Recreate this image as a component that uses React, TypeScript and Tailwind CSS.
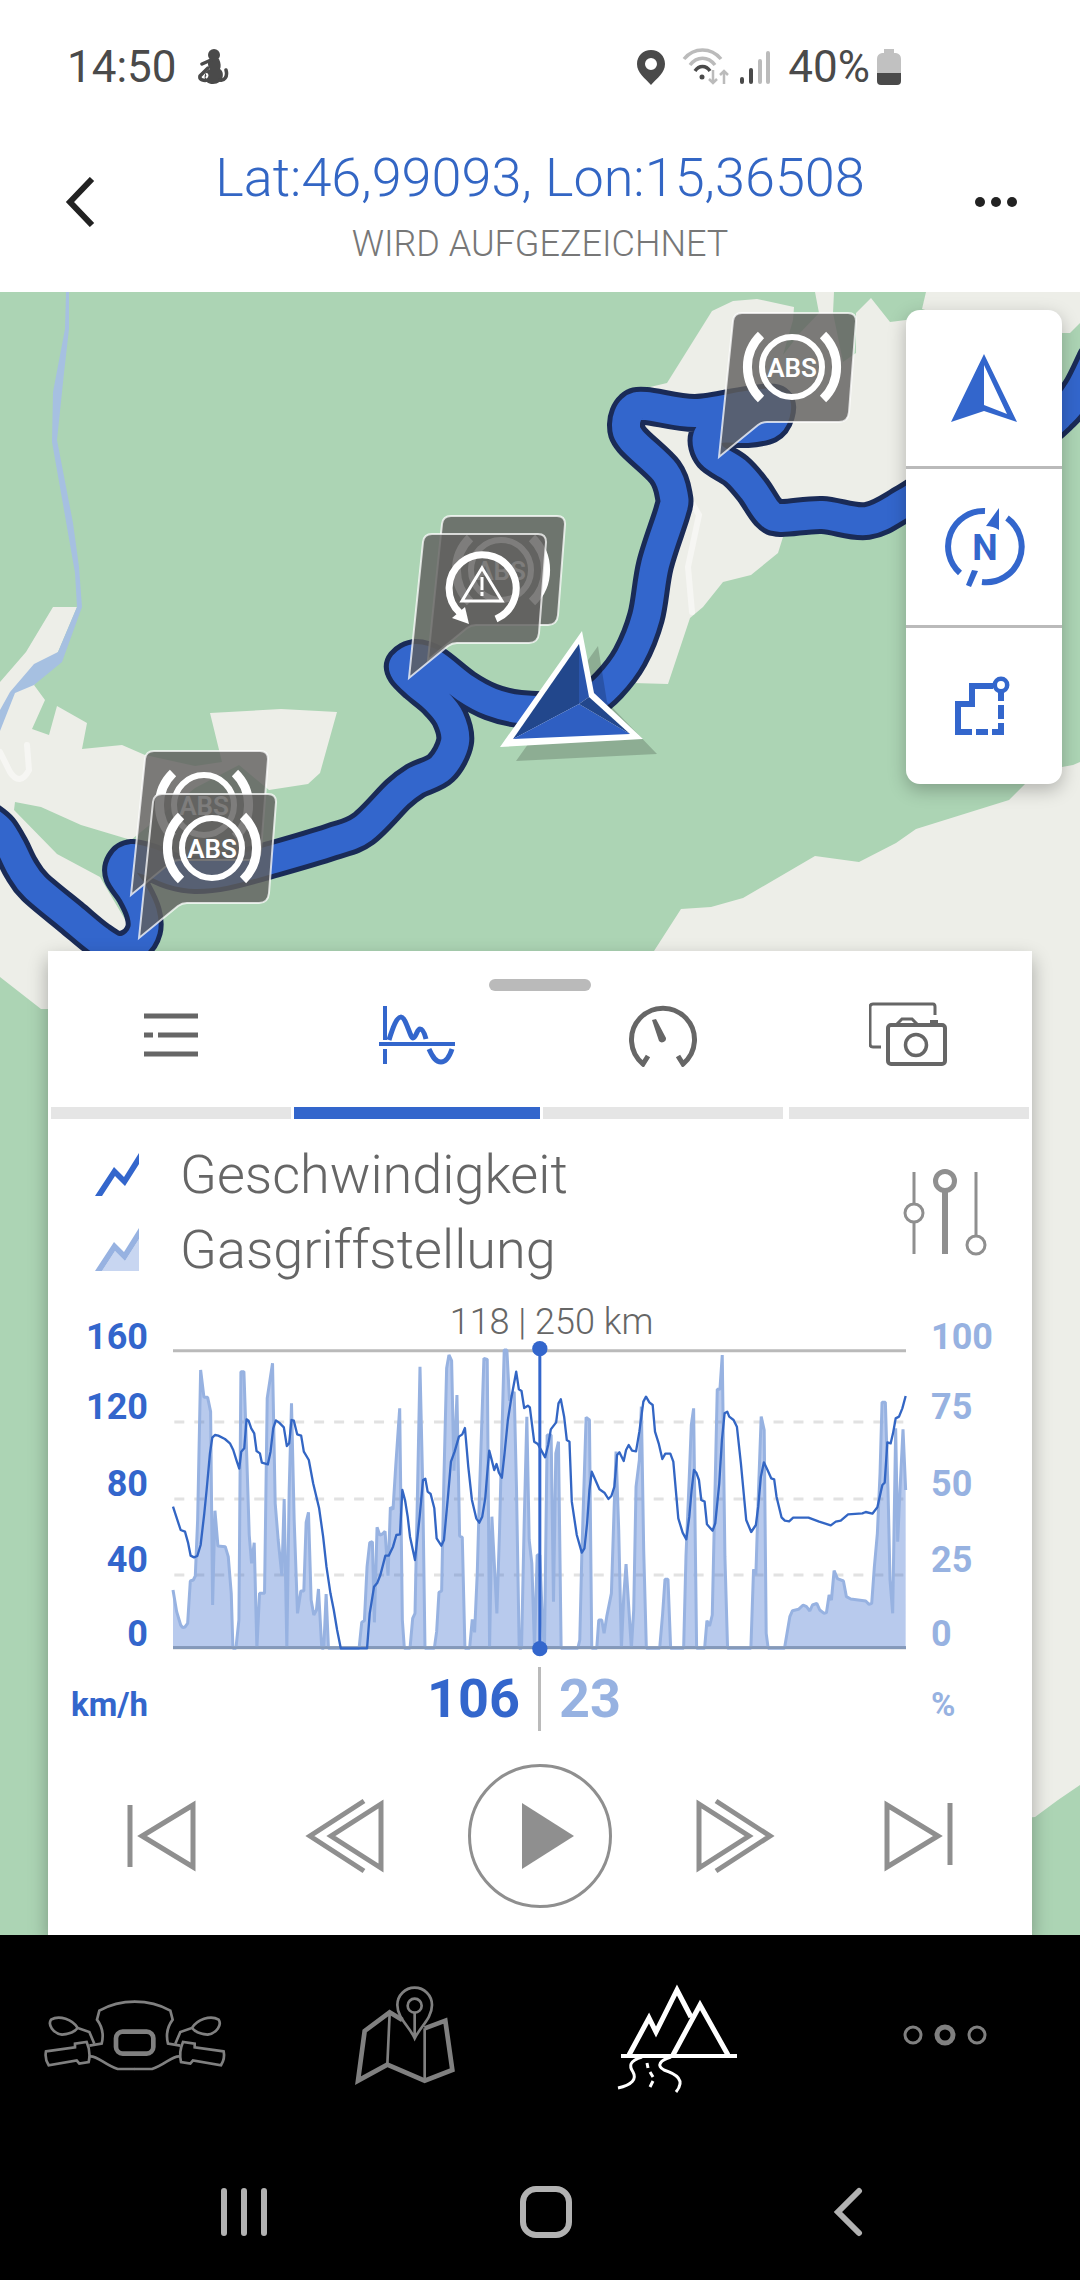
import type { ReactNode } from "react";

type Point = [number, number];

/** Turns "x,y x,y ..." into a list of points. */
const parse = (text: string): Point[] =>
  text.split(" ").map((pair) => pair.split(",").map(Number) as Point);

/** Smooth curve that passes through every point (Catmull-Rom). */
function smooth(points: Point[]): string {
  let d = `M${points[0][0]} ${points[0][1]}`;
  for (let i = 0; i < points.length - 1; i++) {
    const a = points[Math.max(i - 1, 0)];
    const b = points[i];
    const c = points[i + 1];
    const e = points[Math.min(i + 2, points.length - 1)];
    d += `C${b[0] + (c[0] - a[0]) / 6} ${b[1] + (c[1] - a[1]) / 6} ${c[0] - (e[0] - b[0]) / 6} ${c[1] - (e[1] - b[1]) / 6} ${c[0]} ${c[1]}`;
  }
  return d;
}

const ROUTE = smooth(
  parse(
    "-12,820 0,830 11,848 21,868 35,887 71,917 99,940 118,950 135,944 144,930 143,913 134,893 122,875 123,864 132,858 150,862 172,871 195,875 225,872 274,859 331,842 363,829 398,794 415,781 441,768 455,742 450,718 436,700 417,684 405,672 404,664 416,658 434,664 465,688 491,702 520,709 560,709 590,700 609,685 630,657 646,617 655,565 672,512 674,497 665,472 632,440 626,424 632,409 646,406 695,413 747,405 774,403 776,414 768,425 747,429 720,429 707,437 712,455 736,471 753,490 768,512 781,518 822,515 867,521 906,502 960,468 1030,438 1062,413 1080,390 1095,360",
  ),
);

const SPEED =
  "339,650 362,720 375,725 384,757 392,797 402,802 412,798 422,765 433,670 440,600 450,490 457,443 465,435 475,437 495,447 510,460 520,480 530,512 538,536 544,485 553,475 560,388 566,392 574,415 583,430 590,483 600,490 606,518 624,523 632,485 640,415 648,391 658,398 672,412 681,468 688,460 695,390 702,392 712,433 724,437 732,485 747,510 760,580 778,655 790,740 800,830 812,910 822,960 832,1020 843,1075 922,1075 930,970 943,890 953,878 962,855 977,797 987,797 1000,770 1010,735 1021,733 1028,600 1036,630 1044,680 1051,740 1066,810 1080,680 1090,570 1097,566 1104,605 1113,612 1124,655 1131,745 1145,767 1153,750 1165,620 1174,515 1185,485 1198,440 1208,433 1216,414 1226,530 1237,630 1250,685 1259,698 1268,680 1277,625 1283,550 1289,482 1296,508 1304,540 1311,522 1318,548 1327,563 1335,490 1345,390 1356,320 1370,245 1378,298 1386,303 1394,354 1405,347 1411,352 1424,455 1435,462 1442,475 1457,502 1466,465 1474,418 1490,397 1497,340 1504,328 1514,380 1522,450 1530,455 1537,635 1552,735 1567,788 1575,775 1583,700 1590,600 1597,545 1620,598 1635,608 1647,627 1656,618 1665,590 1673,495 1680,487 1693,513 1700,480 1708,465 1718,482 1730,484 1740,425 1752,335 1760,320 1770,337 1780,345 1787,425 1798,460 1809,507 1818,491 1833,491 1842,515 1857,685 1870,728 1881,748 1890,680 1897,600 1904,540 1911,548 1919,570 1926,630 1936,635 1943,703 1960,722 1968,700 1980,580 1988,450 1996,370 2004,365 2010,380 2023,390 2033,410 2045,520 2061,690 2076,726 2090,705 2097,650 2105,560 2114,517 2125,540 2136,565 2145,568 2152,620 2167,682 2177,692 2190,694 2202,683 2248,683 2280,695 2315,706 2330,695 2345,692 2367,673 2410,670 2420,666 2440,671 2455,652 2470,585 2477,578 2485,457 2495,460 2502,430 2510,385 2520,380 2530,355 2540,318";

const THROTTLE =
  "339,900 350,965 362,1005 368,1013 375,1011 383,1000 391,873 400,870 406,858 413,690 422,240 432,322 443,322 452,365 458,945 465,662 474,768 496,770 505,800 514,910 519,1075 528,1075 537,990 543,245 552,245 559,450 568,735 575,820 583,758 591,1075 599,910 614,910 622,325 638,220 646,640 655,750 666,857 673,627 681,1075 688,600 695,340 703,690 713,970 723,903 732,903 739,697 746,667 754,930 762,975 770,960 776,897 786,1075 792,1075 799,912 806,1075 898,1075 906,997 914,992 922,830 930,758 938,755 944,997 952,712 960,735 968,732 976,724 985,857 992,652 1000,658 1008,530 1020,355 1028,990 1034,1075 1051,1075 1059,985 1066,970 1074,580 1081,230 1089,580 1096,1075 1124,1075 1131,1025 1138,907 1146,903 1153,560 1161,235 1168,195 1176,212 1183,542 1192,315 1200,738 1208,742 1216,1075 1230,1075 1238,988 1245,1027 1253,850 1260,600 1273,205 1283,208 1290,1075 1297,680 1312,970 1320,720 1328,400 1334,180 1342,180 1350,332 1364,305 1371,600 1379,1075 1386,1075 1394,700 1402,380 1409,750 1417,820 1425,1075 1433,795 1441,795 1449,1000 1455,1075 1463,435 1475,435 1482,935 1489,490 1497,455 1505,1075 1555,1075 1561,1050 1567,800 1580,382 1590,390 1597,1075 1612,1075 1618,990 1627,990 1634,1030 1642,980 1656,910 1664,660 1670,485 1678,720 1686,1075 1693,920 1700,822 1708,950 1716,1075 1723,960 1730,590 1740,510 1746,350 1753,780 1761,1075 1801,1075 1810,970 1817,868 1826,868 1834,1075 1873,1075 1880,800 1890,560 1896,405 1903,355 1912,1075 1936,1075 1943,992 1951,1008 1959,975 1966,660 1974,298 1982,298 1989,195 1997,800 2005,1075 2075,1075 2083,838 2090,855 2098,600 2106,380 2115,420 2121,1030 2127,1075 2176,1075 2192,980 2200,962 2218,958 2232,945 2242,950 2252,963 2260,945 2273,940 2282,960 2295,970 2302,968 2310,915 2317,930 2325,842 2335,866 2353,873 2362,920 2375,927 2420,933 2430,943 2438,940 2446,830 2455,730 2463,550 2469,337 2479,337 2487,600 2493,870 2501,970 2510,415 2516,755 2523,600 2532,418 2540,600";

/* ---------- Status bar ---------- */

function StatusBar() {
  return (
    <div className="flex h-[134px] items-center justify-between pr-[178px] pl-[67px] text-[44px] leading-none text-[#4a4a4a]">
      <div className="flex items-center gap-5">
        <span>14:50</span>
        <svg viewBox="0 0 32 36" className="h-9 w-8" fill="#4a4a4a" aria-hidden="true">
          <circle cx="17" cy="6" r="6" />
          <path d="M12 10 L22 10 C24 14 24 18 23 20 C28 23 27 35 16 35 C6 35 5 24 13 20 C10 16 11 13 12 10Z" />
          <path d="M14 11 L5 15 M11 19 L3 27 C2 31 7 32 11 31 M23 31 C27 32 31 28 29 21" fill="none" stroke="#4a4a4a" strokeWidth="3.5" strokeLinecap="round" />
          <path d="M9 25 C11 25 11 27 9 29" fill="none" stroke="#fff" strokeWidth="2" />
        </svg>
      </div>
      <div className="flex items-center">
        <svg viewBox="0 0 30 36" className="h-9 w-[30px]" aria-hidden="true">
          <path fillRule="evenodd" fill="#4a4a4a" d="M15 1 C7 1 1 7 1 15 C1 24 9 29 15 36 C21 29 29 24 29 15 C29 7 23 1 15 1Z M15 9 A6 6 0 1 1 15 21 A6 6 0 1 1 15 9Z" />
        </svg>
        <svg viewBox="0 0 48 38" className="ml-4 h-[38px] w-12" fill="none" strokeWidth="3.5" aria-hidden="true">
          <path d="M2 11 C12 -1 29 -1 39 11" stroke="#bbb" />
          <path d="M8 17 C15 8 26 8 33 17" stroke="#bbb" />
          <path d="M13 23 C17 17 24 17 28 23" stroke="#4a4a4a" />
          <circle cx="20" cy="29" r="2.5" fill="#4a4a4a" />
          <path d="M31 22 V35 M27 31 L31 35 L35 31 M42 36 V23 M38 27 L42 23 L46 27" stroke="#bbb" strokeWidth="2.5" />
        </svg>
        <svg viewBox="0 0 34 36" className="ml-2 h-9 w-[34px]" strokeWidth="4" strokeLinecap="round" aria-hidden="true">
          <path d="M4 30 V33 M13 21 V33" stroke="#4a4a4a" />
          <path d="M22 12 V33 M30 4 V33" stroke="#bbb" />
        </svg>
        <span className="ml-4">40%</span>
        <svg viewBox="0 0 26 38" className="ml-1.5 h-[38px] w-[26px]" aria-hidden="true">
          <path d="M8 1 H18 V5 H20 Q25 6 25 11 V26 H1 V11 Q1 6 6 5 H8Z" fill="#c1c1c1" />
          <path d="M1 25 H25 V33 Q25 37 21 37 H5 Q1 37 1 33Z" fill="#4a4a4a" />
        </svg>
      </div>
    </div>
  );
}

function Header() {
  return (
    <header className="flex h-[158px] items-start justify-between px-[58px] pt-3">
      <button type="button" aria-label="Zurück" className="flex h-28 w-12 items-center justify-start">
        <svg viewBox="0 0 40 50" className="h-[50px] w-10" fill="none" stroke="#222" strokeWidth="6">
          <path d="M34 2 L12 25 L34 48" />
        </svg>
      </button>
      <div className="flex flex-col items-center font-light">
        <h1 className="text-[54px] leading-[64px] text-[#3366c4]">Lat:46,99093, Lon:15,36508</h1>
        <p className="text-[36px] leading-[68px] text-[#777]">WIRD AUFGEZEICHNET</p>
      </div>
      <button type="button" aria-label="Mehr" className="flex h-28 w-12 items-center justify-start">
        <svg viewBox="0 0 44 12" className="h-3 w-11" fill="#222">
          <circle cx="6" cy="6" r="5" />
          <circle cx="22" cy="6" r="5" />
          <circle cx="38" cy="6" r="5" />
        </svg>
      </button>
    </header>
  );
}

/* ---------- Map ---------- */

function Bubble({ x, y, children }: { x: number; y: number; children: ReactNode }) {
  return (
    <g transform={`translate(${x} ${y})`}>
      <path
        d="M0 0 L14 -136 Q15 -144 23 -144 H129 Q137 -144 137 -136 L130 -45 Q129 -35 120 -35 H48 Q43 -35 39 -32 Z"
        fill="#605f5e"
        fillOpacity="0.81"
        stroke="#fff"
        strokeOpacity="0.75"
        strokeWidth="2"
      />
      <g transform="translate(73 -90)">{children}</g>
    </g>
  );
}

function AbsSign() {
  return (
    <g fill="none" stroke="#fff">
      <circle r="30" strokeWidth="6" />
      <path d="M-31 -32 A44.5 44.5 0 0 0 -31 32 M31 -32 A44.5 44.5 0 0 1 31 32" strokeWidth="9" />
      <text
        y="10"
        textAnchor="middle"
        fill="#fff"
        stroke="none"
        className="font-['Liberation_Sans_Narrow',Roboto,sans-serif] text-[26px] font-semibold"
      >
        ABS
      </text>
    </g>
  );
}

function TractionSign() {
  return (
    <g fill="none" stroke="#fff">
      <path d="M-22 25 A33.5 33.5 0 1 1 14 31" strokeWidth="7" />
      <path d="M-30 30 L-17 19 L-13 36Z" fill="#fff" stroke="none" />
      <path d="M0 -20 L20 13 H-20Z" strokeWidth="3" />
      <path d="M0 -11 V2 M0 4 V8" strokeWidth="3" />
    </g>
  );
}

function MapCanvas() {
  return (
    <svg
      viewBox="0 292 1080 1643"
      preserveAspectRatio="xMidYMin slice"
      className="absolute inset-0 h-full w-full"
      role="img"
      aria-label="Karte mit aufgezeichneter Route"
    >
      <rect y="292" width="1080" height="1643" fill="#acd4b4" />
      <g fill="#edeee8">
        <path d="M53 607 H77 L58 652 L34 685 L45 700 L32 729 L49 735 L57 706 L87 723 L82 749 L122 745 L145 755 L195 766 L222 762 L210 713 L281 709 L337 712 L320 773 L308 784 L269 790 L239 765 L195 788 L131 840 L81 825 L41 807 L15 802 L14 810 L57 854 L100 877 L127 923 L130 970 L48 1009 H41 L0 977 V682 L26 652Z" />
        <path d="M650 387 L667 383 L712 311 L733 301 L757 299 L794 307 L793 320 L783 355 L800 333 L819 313 L815 292 H834 L833 313 L843 362 L856 353 V313 L871 298 L890 322 L906 320 L980 340 L906 510 L783 537 L778 553 L751 575 L723 582 L703 607 L690 618 L668 684 L633 683 L655 600 L675 500 L630 420Z" />
        <path d="M926 292 H1080 V323 L1070 333 H1000 L922 309Z" />
        <path d="M654 951 L681 909 L711 907 L743 898 L815 856 L859 862 L896 843 L916 829 L1009 800 L1025 784 L1062 767 L1073 765 L1080 762 V1785 L1058 1800 L1035 1817 L900 1830Z" />
      </g>
      <path
        d="M66 292 L65 329 L53 392 L52 442 L64 510 L75 573 L77 607 L58 652 L34 664 L10 692 L0 710 V731 L15 693 L34 685 L62 662 L82 607 L79 567 L73 523 L57 440 L64 373 L69 329 V292Z"
        fill="#a6c0e1"
      />
      <path
        d="M0 752 L10 772 Q20 787 29 770 L27 745 M692 503 L699 515 L688 567 L692 612"
        fill="none"
        stroke="#f6f6f3"
        strokeWidth="6"
        strokeLinecap="round"
      />
      <g fill="none" strokeLinejoin="round" strokeLinecap="round">
        <path d={ROUTE} stroke="#1a2b57" strokeWidth="38" />
        <path d={ROUTE} stroke="#3366cc" strokeWidth="28" />
      </g>

      <Bubble x={719} y={457}>
        <AbsSign />
      </Bubble>
      <Bubble x={428} y={660}>
        <AbsSign />
      </Bubble>
      <Bubble x={409} y={678}>
        <TractionSign />
      </Bubble>
      <Bubble x={131} y={895}>
        <AbsSign />
      </Bubble>
      <Bubble x={139} y={938}>
        <AbsSign />
      </Bubble>

      <path d="M598 646 L607 702 L657 754 L516 761Z" fillOpacity="0.18" />
      <path d="M582 631 L594 693 L643 739 L500 747Z" fill="#fff" />
      <path d="M579 644 L579 704 L513 739Z" fill="#22478c" />
      <path d="M579 644 L589 697 L579 704Z" fill="#2a55ac" />
      <path d="M579 704 L630 734 L513 739Z" fill="#2f5fc2" />
      <path d="M579 704 L589 697 L630 734Z" fill="#22478c" />
    </svg>
  );
}

function MapTools() {
  return (
    <div className="absolute top-[18px] right-[18px] flex w-[156px] flex-col divide-y-3 divide-[#bababa] overflow-hidden rounded-[14px] bg-white shadow-[0_6px_18px_rgba(0,0,0,0.25)]">
      <button type="button" aria-label="Position" className="block">
        <svg viewBox="0 0 156 156" className="w-full" fill="#3366cc">
          <path fillRule="evenodd" d="M78 44 L111 112 L78 101 L45 112Z M78 55 V95 L101 104Z" />
        </svg>
      </button>
      <button type="button" aria-label="Nach Norden ausrichten" className="block">
        <svg viewBox="0 0 156 156" className="w-full" fill="#3366cc">
          <path d="M79 42 A35.5 35.5 0 0 0 54 104 M76 113 A35.5 35.5 0 0 0 101 49" fill="none" stroke="#3366cc" strokeWidth="6" />
          <path d="M93 39 V61 Q87 57 80 57Z" />
          <path d="M66 101 L72 102 L65 118 L60 116Z" />
          <text x="79" y="91" textAnchor="middle" className="text-[36px] font-bold">
            N
          </text>
        </svg>
      </button>
      <button type="button" aria-label="Route" className="block">
        <svg viewBox="0 0 156 156" className="w-full" fill="none" stroke="#3366cc" strokeWidth="6">
          <path d="M66 104 H52 V76 H66 V58 H87 M95 64 V73 M95 77 V91 M95 95 V104 H86 M70 104 H82" />
          <circle cx="95" cy="57" r="6.2" strokeWidth="4.5" />
        </svg>
      </button>
    </div>
  );
}

/* ---------- Panel ---------- */

const TABS = [
  {
    label: "Liste",
    active: false,
    icon: (
      <svg viewBox="0 0 54 44" className="h-11 w-[54px]" fill="none" stroke="#666" strokeWidth="5">
        <path d="M0 3 H54 M0 22 H9 M14 22 H54 M0 41 H54" />
      </svg>
    ),
  },
  {
    label: "Diagramm",
    active: true,
    icon: (
      <svg viewBox="0 0 76 60" className="h-[60px] w-[76px]" fill="none" stroke="#3366cc" strokeWidth="4">
        <path d="M6 1 V35 M6 44 V59 M0 39 H76" />
        <path d="M10 35 C14 22 18 12 22 12 C27 12 31 33 34 33 C37 33 38 24 41 24 C44 24 46 30 47 34 M50 44 C54 53 57 57 62 57 C67 57 70 53 73 44" strokeWidth="5" />
      </svg>
    ),
  },
  {
    label: "Instrumente",
    active: false,
    icon: (
      <svg viewBox="0 0 70 64" className="h-16 w-[70px]" fill="none" stroke="#666" strokeWidth="5">
        <path d="M20 53 L15 61 A31.5 31.5 0 1 1 55 61 L50 53" />
        <path d="M24 17 L28 16 L38 35 A4 4 0 0 1 31 38Z" fill="#666" stroke="none" />
      </svg>
    ),
  },
  {
    label: "Fotos",
    active: false,
    icon: (
      <svg viewBox="2 1 80 66" className="h-[66px] w-20" fill="none" stroke="#666" strokeWidth="4">
        <path d="M14 46 H6 Q3 46 3 43 V6 Q3 3 6 3 H66 Q68 3 68 6 V14" strokeWidth="3" />
        <rect x="21" y="24" width="57" height="39" rx="3" />
        <path d="M30 23 L35 18 H45 L50 23" strokeWidth="3" />
        <path d="M63 21 H71" strokeWidth="4" />
        <circle cx="49" cy="44" r="10.5" strokeWidth="3.5" />
      </svg>
    ),
  },
];

function Tabs() {
  return (
    <nav className="grid grid-cols-4">
      {TABS.map((tab) => (
        <button type="button" key={tab.label} aria-label={tab.label} className="flex flex-col">
          <span className="flex h-[88px] items-center justify-center self-stretch">{tab.icon}</span>
          <span className={tab.active ? "mt-7 h-3 self-stretch bg-[#3366cc]" : "mx-[3px] mt-7 h-3 self-stretch bg-[#e5e5e5]"} />
        </button>
      ))}
    </nav>
  );
}

function Legend() {
  return (
    <div className="flex items-center justify-between pt-[18px] pr-[45px] pl-[46px]">
      <ul className="text-[54px] leading-[75px] font-light text-[#666]">
        <li className="flex items-center gap-10">
          <svg viewBox="0 0 46 44" className="h-11 w-[46px]" fill="#3366cc" aria-hidden="true">
            <path d="M1 43 L20 14 L30 24 L45 0 V11 L31 33 L21 23 L8 43Z" />
          </svg>
          Geschwindigkeit
        </li>
        <li className="flex items-center gap-10">
          <svg viewBox="0 0 46 44" className="h-11 w-[46px]" aria-hidden="true">
            <path d="M8 43 L21 23 L31 33 L45 11 V43Z" fill="#c8d6f1" />
            <path d="M1 43 L20 14 L30 24 L45 0 V11 L31 33 L21 23 L8 43Z" fill="#97b2e1" />
          </svg>
          Gasgriffstellung
        </li>
      </ul>
      <button type="button" aria-label="Anzeige anpassen">
        <svg viewBox="0 0 84 88" className="h-[88px] w-[84px]" fill="none" stroke="#8f8f8f" strokeWidth="3">
          <path d="M11 4 V36 M11 55 V86 M73 4 V68" />
          <circle cx="11" cy="45" r="9" />
          <circle cx="73" cy="77" r="9" />
          <path d="M42 23 V86" strokeWidth="6" />
          <circle cx="42" cy="13" r="9.5" strokeWidth="5" />
        </svg>
      </button>
    </div>
  );
}

function Axis({ labels, className }: { labels: string[]; className: string }) {
  return (
    <div className={`grid shrink-0 grid-rows-[70px_77px_76px_74px_71px_42px] pt-4 text-[36px] leading-[42px] font-bold ${className}`}>
      {labels.map((label, i) => (
        <span key={label} className={i === 5 ? "text-[33px]" : ""}>
          {label}
        </span>
      ))}
    </div>
  );
}

function Chart() {
  return (
    <div className="mt-[13px] flex pb-[13px]">
      <Axis labels={["160", "120", "80", "40", "0", "km/h"]} className="w-[100px] text-right text-[#3366cc]" />
      <div className="mx-[25px] min-w-0 flex-1">
        <p className="pl-6 text-center text-[36px] leading-[44px] font-light text-[#666]">118 | 250 km</p>
        <svg
          viewBox="339 180 2202 900"
          preserveAspectRatio="none"
          className="mt-1.5 block h-[300px] w-full overflow-visible"
          role="img"
          aria-label="Geschwindigkeit und Gasgriffstellung über die Strecke"
        >
          <path d="M339 182 H2541" stroke="#bababa" strokeWidth="9" />
          <path d="M343 396 H2541 M343 627 H2541 M343 855 H2541" stroke="#e2e2e2" strokeWidth="9" strokeDasharray="30 30" />
          <path d="M339 1073 H2541" stroke="#a3abb8" strokeWidth="9" />
          <polygon points={`339,1076 ${THROTTLE} 2540,1076`} fill="#3366cc" fillOpacity="0.35" />
          <polyline points={THROTTLE} fill="none" stroke="#97b2e1" strokeWidth="9" strokeLinejoin="bevel" />
          <path d="M339 1073 H2541" stroke="#8499b9" strokeWidth="8" />
          <polyline points={SPEED} fill="none" stroke="#3366c4" strokeWidth="7" strokeLinejoin="round" />
          <path d="M1441 176 V1076" stroke="#3366cc" strokeWidth="9" />
          <circle cx="1441" cy="176" r="23" fill="#3366cc" />
          <circle cx="1441" cy="1076" r="23" fill="#3366cc" />
        </svg>
        <div className="mt-[17px] grid h-[63px] grid-cols-[1fr_3px_1fr] gap-[18px] text-[54px] leading-[64px] font-bold">
          <span className="text-right text-[#3366cc]">106</span>
          <span className="bg-[#bababa]" />
          <span className="text-[#97b2e1]">23</span>
        </div>
      </div>
      <Axis labels={["100", "75", "50", "25", "0", "%"]} className="w-[101px] text-[#97b2e1]" />
    </div>
  );
}

function Playback() {
  return (
    <div className="flex items-center justify-between px-[54px] pt-[21px] pb-[27px]">
      <button type="button" aria-label="Zum Anfang" className="flex w-[120px] justify-center">
        <svg viewBox="0 0 70 76" className="h-[76px] w-[70px]" fill="none" stroke="#8f8f8f" strokeWidth="5">
          <path d="M3 7 V69 M66 7 V69 L15 38Z" />
        </svg>
      </button>
      <button type="button" aria-label="Zurückspulen" className="flex w-20 justify-center">
        <svg viewBox="0 0 80 76" className="h-[76px] w-20" fill="none" stroke="#8f8f8f" strokeWidth="5">
          <path d="M76 6 V70 L26 38Z M59 3 L5 38 L59 73" />
        </svg>
      </button>
      <button type="button" aria-label="Wiedergabe" className="flex size-36 items-center justify-center rounded-full border-3 border-[#8f8f8f]">
        <svg viewBox="0 0 52 66" className="ml-4 h-[66px] w-[52px]" fill="#8f8f8f">
          <path d="M0 0 L52 33 L0 66Z" />
        </svg>
      </button>
      <button type="button" aria-label="Vorspulen" className="flex w-20 justify-center">
        <svg viewBox="0 0 80 76" className="h-[76px] w-20" fill="none" stroke="#8f8f8f" strokeWidth="5">
          <path d="M4 6 V70 L54 38Z M21 3 L75 38 L21 73" />
        </svg>
      </button>
      <button type="button" aria-label="Zum Ende" className="flex w-[120px] justify-center">
        <svg viewBox="0 0 70 76" className="h-[76px] w-[70px]" fill="none" stroke="#8f8f8f" strokeWidth="5">
          <path d="M67 5 V67 M4 7 V69 L55 38Z" />
        </svg>
      </button>
    </div>
  );
}

/* ---------- Bottom bars ---------- */

function BarEnd() {
  return (
    <>
      <path d="M180 228 L217 222 C224 195 218 170 203 150 L210 123 C245 103 280 96 317 96" />
      <path d="M195 222 L180 187 L145 175 C130 150 90 135 65 150 C55 165 70 190 98 195 C125 192 140 182 145 175" />
      <path d="M50 245 L137 233 V222 L172 217 C182 240 182 260 178 277 L150 282 L142 272 L58 287 C47 270 48 255 50 245Z" />
      <path d="M182 260 C205 258 225 285 265 298 H317" />
    </>
  );
}

function AppNav() {
  return (
    <nav className="grid h-[200px] grid-cols-4 place-items-center">
      <a href="#motorrad" aria-label="Motorrad">
        <svg viewBox="44 85 549 222" className="h-[74px] w-[183px]" fill="none" stroke="#808080" strokeWidth="8">
          <BarEnd />
          <g transform="matrix(-1 0 0 1 633 0)">
            <BarEnd />
          </g>
          <rect x="260" y="186" width="112" height="66" rx="20" strokeWidth="14" />
        </svg>
      </a>
      <a href="#karte" aria-label="Karte">
        <svg viewBox="973 45 309 303" className="h-[101px] w-[103px]" fill="none" stroke="#808080" strokeWidth="8">
          <path d="M1118 150 L1080 127 L1005 183 L985 332 L1073 284 L1185 332 L1268 300 L1247 152 L1185 175" strokeWidth="14" />
          <path d="M1080 130 L1073 284 M1185 175 V332" />
          <path d="M1155 205 C1140 170 1103 145 1103 105 A52 52 0 0 1 1207 105 C1207 145 1172 170 1155 205Z M1155 128 V200" />
          <circle cx="1155" cy="107" r="21" />
        </svg>
      </a>
      <a href="#touren" aria-label="Touren" aria-current="page">
        <svg viewBox="614 1978 122 114" className="h-[114px] w-[122px] overflow-visible" fill="none" stroke="#fff" strokeWidth="5">
          <path d="M629 2055 L649 2018 L656 2032 L677 1990 L691 2017 M673 2055 L700 2005 L728 2055" />
          <path d="M621 2056 H737" strokeWidth="4" />
          <path d="M642 2057 C629 2061 629 2066 633 2072 C637 2079 632 2085 618 2088 M671 2057 C660 2060 656 2066 664 2070 C676 2074 686 2080 676 2092 M647 2063 L648 2068 M650 2072 L653 2077 M653 2081 L650 2087" strokeWidth="3" />
        </svg>
      </a>
      <a href="#mehr" aria-label="Weitere">
        <svg viewBox="0 0 84 24" className="h-6 w-[84px]" fill="none" stroke="#808080" strokeWidth="3">
          <circle cx="10" cy="12" r="8" />
          <circle cx="42" cy="12" r="8" strokeWidth="5" />
          <circle cx="74" cy="12" r="8" />
        </svg>
      </a>
    </nav>
  );
}

function SystemNav() {
  return (
    <div className="flex h-[145px] items-center justify-center pt-2 pl-3">
      <button type="button" aria-label="Letzte Apps" className="flex w-[302px] justify-center">
        <svg viewBox="0 0 48 52" className="h-[52px] w-12" stroke="#b2b2b2" strokeWidth="6" strokeLinecap="round">
          <path d="M4 5 V47 M24 5 V47 M44 5 V47" />
        </svg>
      </button>
      <button type="button" aria-label="Startbildschirm" className="flex w-[302px] justify-center">
        <span className="size-[52px] rounded-2xl border-6 border-[#b2b2b2]" />
      </button>
      <button type="button" aria-label="Zurück" className="flex w-[302px] justify-center">
        <svg viewBox="0 0 30 52" className="h-[52px] w-[30px]" fill="none" stroke="#b2b2b2" strokeWidth="6" strokeLinecap="round">
          <path d="M26 5 L5 26 L26 47" />
        </svg>
      </button>
    </div>
  );
}

export default function App() {
  return (
    <div className="flex min-h-screen flex-col bg-white font-[Roboto,sans-serif]">
      <StatusBar />
      <Header />
      <main className="relative flex-1 overflow-hidden px-12 pt-[659px]">
        <MapCanvas />
        <MapTools />
        <section className="relative bg-white shadow-[0_8px_18px_rgba(0,0,0,0.3)]">
          <div className="flex justify-center pt-7">
            <button type="button" aria-label="Bereich verschieben" className="h-3 w-[102px] rounded-full bg-[#bababa]" />
          </div>
          <Tabs />
          <Legend />
          <Chart />
          <Playback />
        </section>
      </main>
      <footer className="bg-black">
        <AppNav />
        <SystemNav />
      </footer>
    </div>
  );
}
